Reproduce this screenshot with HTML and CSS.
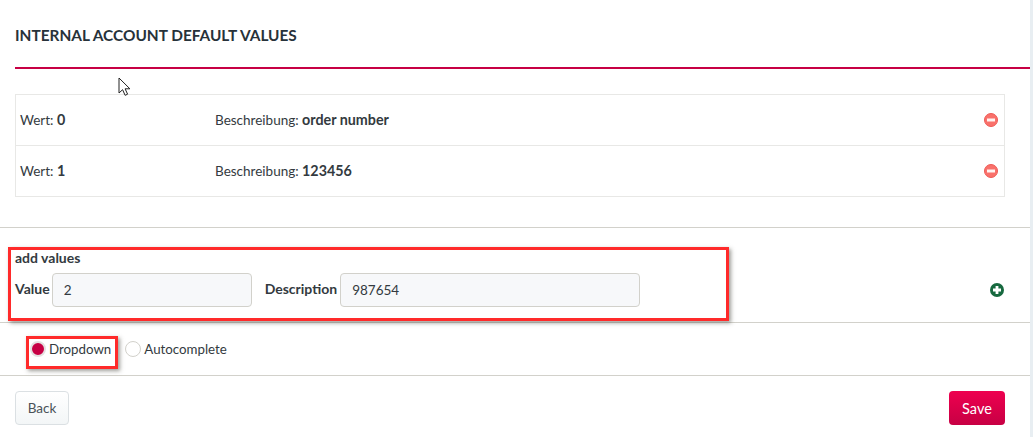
FILE: index.html
```html
<!DOCTYPE html>
<html lang="en">
<head>
    <meta charset="UTF-8">
    <title>Internal Account Default Values</title>
    <link rel="stylesheet" href="styles.css">
</head>
<body>
    <div class="page">
        <div class="heading">
            <h1>INTERNAL ACCOUNT DEFAULT VALUES</h1>
        </div>
        <svg class="cursor" width="15" height="20" viewBox="0 0 15 20">
            <path d="M1 1v15l3.600-3.300 2.500 5.600 2.500-1.100-2.500-5.400h4.800z" fill="#fff" stroke="#222" stroke-width="1"/>
        </svg>

        <div class="values">
            <div class="value-row">
                <span class="value-col">Wert: <b>0</b></span>
                <span class="desc-col">Beschreibung: <b>order number</b></span>
                <svg class="icon" width="14" height="14" viewBox="0 0 14 14">
                    <circle cx="7" cy="7" r="6.500" fill="#f9716b" stroke="#ee5a55"/>
                    <rect x="3" y="5.500" width="8" height="3" fill="#fff4f2"/>
                </svg>
            </div>
            <div class="value-row">
                <span class="value-col">Wert: <b>1</b></span>
                <span class="desc-col">Beschreibung: <b>123456</b></span>
                <svg class="icon" width="14" height="14" viewBox="0 0 14 14">
                    <circle cx="7" cy="7" r="6.500" fill="#f9716b" stroke="#ee5a55"/>
                    <rect x="3" y="5.500" width="8" height="3" fill="#fff4f2"/>
                </svg>
            </div>
        </div>

        <div class="add-section">
            <div class="add-form">
                <div class="add-title">add values</div>
                <div class="fields">
                    <label class="field-label">Value</label>
                    <input class="field field-value" type="text" value="2">
                    <label class="field-label">Description</label>
                    <input class="field" type="text" value="987654">
                </div>
            </div>
            <svg class="add-icon" width="14" height="14" viewBox="0 0 14 14">
                <circle cx="7" cy="7" r="7" fill="#17693f"/>
                <path d="M5.600 3h2.800v2.600H11v2.800H8.400V11H5.600V8.400H3V5.600h2.600z" fill="#fff"/>
            </svg>
            <div class="mark mark-form"></div>
        </div>

        <div class="type-section">
            <label class="radio"><span class="radio-dot checked"></span>Dropdown</label>
            <label class="radio"><span class="radio-dot"></span>Autocomplete</label>
            <div class="mark mark-radio"></div>
        </div>

        <div class="footer">
            <button class="btn btn-back">Back</button>
            <button class="btn btn-save">Save</button>
        </div>
    </div>
</body>
</html>
```

FILE: styles.css
```css
html, body {
    height: 100%;
}

body {
    margin: 0;
    background-color: #e8eef2;
    font-family: "Lato", "Noto Sans", sans-serif;
    font-size: 13.5px;
    color: #333a40;
    overflow: hidden;
}

b {
    font-size: 14.3px;
}

.page {
    position: relative;
    width: 1030px;
    height: 437px;
    background-color: #fff;
}

.heading {
    margin-left: 15px;
    height: 67px;
    border-bottom: 2px solid #c70044;
}

h1 {
    margin: 0;
    padding-top: 26px;
    font-size: 15.4px;
    line-height: 18px;
    font-weight: 700;
    color: #27323a;
}

.cursor {
    position: absolute;
    left: 118px;
    top: 77px;
}

.values {
    margin: 25px 25px 0 15px;
    border: 1px solid #e8e8e6;
}

.value-row {
    display: flex;
    align-items: center;
    height: 50px;
    padding: 0 6px 0 4px;
}

.value-row span {
    margin-top: -2px;
}

.value-row + .value-row {
    border-top: 1px solid #e8e8e6;
}

.value-col {
    width: 195px;
}

.desc-col {
    flex: 1;
}

.add-section {
    position: relative;
    display: flex;
    align-items: center;
    justify-content: space-between;
    height: 94px;
    margin-top: 30px;
    padding: 0 26px 0 15px;
    border-top: 1px solid #d2d1cb;
    border-bottom: 1px solid #d2d1cb;
}

.add-title {
    font-weight: 700;
    font-size: 14px;
    line-height: 18px;
    margin-bottom: 6px;
}

.add-form {
    margin-top: 6px;
}

.fields {
    display: flex;
    align-items: center;
}

.field-label {
    font-weight: 700;
    font-size: 14px;
    margin-right: 2px;
    margin-top: -3px;
}

.field-value + .field-label {
    margin-right: 3px;
}

.field {
    box-sizing: border-box;
    width: 300px;
    height: 34px;
    padding: 0 11px;
    border: 1px solid #d2d1cb;
    border-radius: 4px;
    background-color: #f7f8fa;
    font-family: inherit;
    font-size: 13.5px;
    color: #333a40;
}

.field-value {
    width: 200px;
    margin-right: 13px;
}

.add-icon {
    margin-top: 30px;
}

.mark {
    position: absolute;
    box-sizing: border-box;
    border: 3px solid #ff2a2a;
    box-shadow: 2px 2px 4px rgba(60, 60, 50, 0.5);
    pointer-events: none;
}

.mark-form {
    left: 8px;
    top: 19px;
    width: 721px;
    height: 74px;
}

.type-section {
    position: relative;
    display: flex;
    align-items: center;
    gap: 14px;
    height: 52px;
    padding-left: 30px;
    border-bottom: 1px solid #d2d1cb;
    font-size: 13.3px;
}

.radio {
    display: flex;
    align-items: center;
    gap: 3px;
}

.radio-dot {
    box-sizing: border-box;
    width: 16px;
    height: 16px;
    border: 1px solid #d2d1cb;
    border-radius: 50%;
    background-color: #fff;
}

.radio-dot.checked {
    border: 2px solid #e4e0e0;
    background-color: #c70044;
}

.mark-radio {
    left: 26px;
    top: 13px;
    width: 92px;
    height: 33px;
}

.footer {
    display: flex;
    justify-content: space-between;
    padding: 15px 25px 0 15px;
}

.btn {
    height: 34px;
    border-radius: 4px;
    font-family: inherit;
    font-size: 13.5px;
}

.btn-back {
    width: 54px;
    border: 1px solid #dbe0e3;
    background: linear-gradient(#fff, #f3f6f7);
    color: #4a5258;
}

.btn-save {
    width: 56px;
    border: 0;
    background: linear-gradient(#ee004f, #c70044);
    color: #fff;
    font-size: 14.5px;
}
```
